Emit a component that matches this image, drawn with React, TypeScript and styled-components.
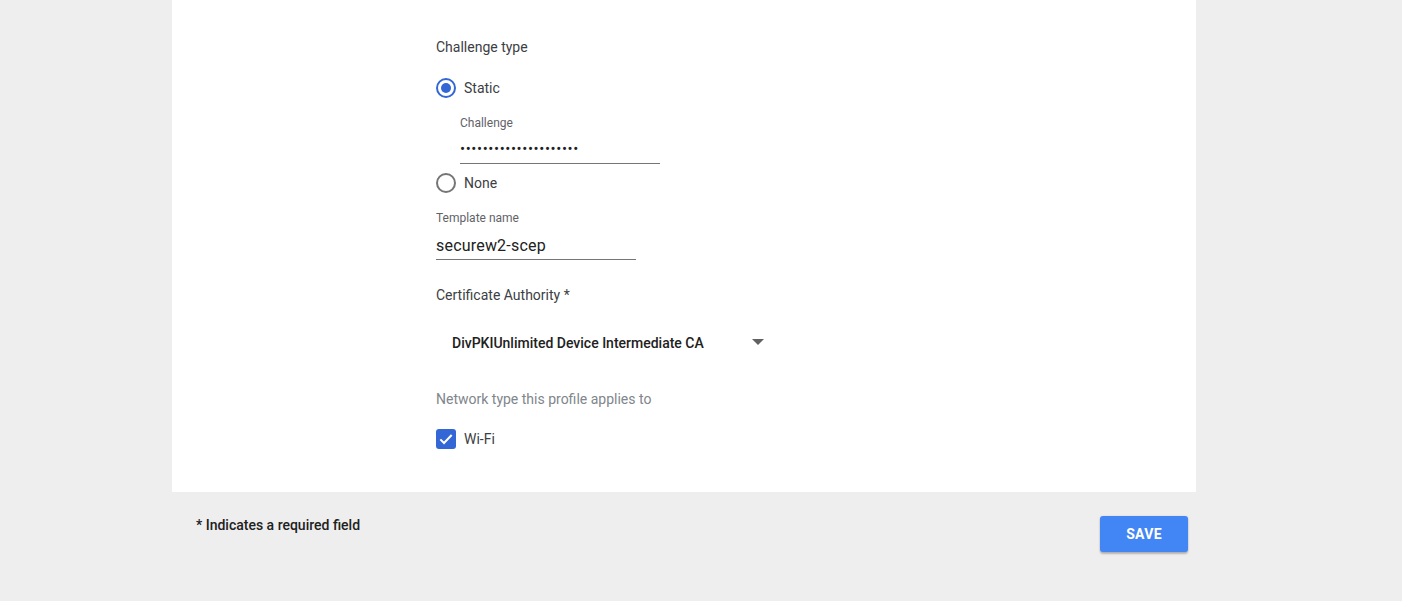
import React from "react";
import styled, { createGlobalStyle } from "styled-components";

const Global = createGlobalStyle`
  html, body { margin: 0; padding: 0; background: #eeeeee; }
  body { font-family: Roboto, "Noto Sans", Arial, sans-serif; color: #212121; }
  * { box-sizing: border-box; }
`;

const Page = styled.div`
  width: 1402px;
  min-height: 601px;
  background: #eeeeee;
  padding-left: 172px;
`;

const Panel = styled.section`
  width: 1024px;
  height: 492px;
  background: #ffffff;
  padding: 37px 0 0 264px;
  display: flex;
  flex-direction: column;
`;

const Title = styled.div<{ $muted?: boolean; $mt?: number }>`
  font-size: 14px;
  line-height: 20px;
  margin-top: ${(p) => p.$mt ?? 0}px;
  color: ${(p) => (p.$muted ? "#80868b" : "#3c4043")};
`;

const OptionRow = styled.label<{ $mt: number }>`
  display: flex;
  align-items: center;
  gap: 8px;
  height: 20px;
  margin-top: ${(p) => p.$mt}px;
  font-size: 14px;
  line-height: 20px;
  color: #3c4043;
  cursor: pointer;
`;

const OptionText = styled.span`
  margin-top: -1px;
`;

const Radio = styled.span<{ $on?: boolean }>`
  width: 20px;
  height: 20px;
  border-radius: 50%;
  border: 2px solid ${(p) => (p.$on ? "#3367d6" : "#757575")};
  display: flex;
  align-items: center;
  justify-content: center;
  &::after {
    content: "";
    width: 10px;
    height: 10px;
    border-radius: 50%;
    background: ${(p) => (p.$on ? "#3367d6" : "transparent")};
  }
`;

const Check = styled.span`
  width: 20px;
  height: 20px;
  border-radius: 3px;
  background: #3367d6;
  display: flex;
  align-items: center;
  justify-content: center;
`;

const Field = styled.div<{ $mt: number; $ml?: number; $w: number }>`
  display: flex;
  flex-direction: column;
  margin-top: ${(p) => p.$mt}px;
  margin-left: ${(p) => p.$ml ?? 0}px;
  width: ${(p) => p.$w}px;
`;

const FieldLabel = styled.div`
  font-size: 12px;
  line-height: 16px;
  color: #5f6368;
`;

const TextInput = styled.input<{ $h: number; $fs: number; $ls?: number; $pt?: number }>`
  height: ${(p) => p.$h}px;
  border: none;
  border-bottom: 1px solid #757575;
  outline: none;
  padding: ${(p) => p.$pt ?? 0}px 0 0 0;
  font-family: Roboto, "Noto Sans", Arial, sans-serif;
  font-size: ${(p) => p.$fs}px;
  letter-spacing: ${(p) => p.$ls ?? 0.2}px;
  color: #212121;
  background: transparent;
`;

const Select = styled.div`
  margin-top: 18px;
  width: 340px;
  height: 40px;
  display: flex;
  align-items: center;
  justify-content: space-between;
  padding: 0 12px 0 16px;
  font-size: 14px;
  font-weight: 500;
  color: #212121;
`;

const Arrow = styled.span`
  width: 0;
  height: 0;
  border-left: 6px solid transparent;
  border-right: 6px solid transparent;
  border-top: 6px solid #616161;
  margin-top: -2px;
`;

const Footer = styled.footer`
  width: 1024px;
  display: flex;
  justify-content: space-between;
  align-items: flex-start;
  padding: 0 8px 0 24px;
`;

const Note = styled.div`
  padding-top: 23px;
  font-size: 14px;
  line-height: 20px;
  font-weight: 500;
  color: #212121;
`;

const SaveButton = styled.button`
  margin-top: 24px;
  width: 88px;
  height: 36px;
  border: none;
  border-radius: 3px;
  background: #4285f4;
  color: #ffffff;
  font-family: Roboto, "Noto Sans", Arial, sans-serif;
  font-size: 14px;
  font-weight: 700;
  letter-spacing: 0.3px;
  padding: 0 0 1px 0;
  box-shadow: 0 2px 2px rgba(0, 0, 0, 0.24), 0 0 2px rgba(0, 0, 0, 0.12);
  cursor: pointer;
`;

export default function App() {
  return (
    <Page>
      <Global />
      <Panel>
        <Title>Challenge type</Title>
        <OptionRow $mt={21}>
          <Radio $on />
          <OptionText>Static</OptionText>
        </OptionRow>
        <Field $mt={17} $ml={24} $w={200}>
          <FieldLabel>Challenge</FieldLabel>
          <TextInput type="password" readOnly value="abcdefghijklmnopqrstu" $h={33} $fs={15} $ls={0.6} $pt={3} />
        </Field>
        <OptionRow $mt={9}>
          <Radio />
          <OptionText>None</OptionText>
        </OptionRow>
        <Field $mt={17} $w={200}>
          <FieldLabel>Template name</FieldLabel>
          <TextInput type="text" readOnly value="securew2-scep" $h={34} $fs={16} $pt={6} />
        </Field>
        <Title $mt={25}>Certificate Authority *</Title>
        <Select>
          DivPKIUnlimited Device Intermediate CA
          <Arrow />
        </Select>
        <Title $muted $mt={26}>Network type this profile applies to</Title>
        <OptionRow $mt={20}>
          <Check>
            <svg width="16" height="16" viewBox="0 0 24 24">
              <path d="M3.5 12.5l5.5 5.5L20.5 6" fill="none" stroke="#fff" strokeWidth="3" />
            </svg>
          </Check>
          <OptionText>Wi-Fi</OptionText>
        </OptionRow>
      </Panel>
      <Footer>
        <Note>* Indicates a required field</Note>
        <SaveButton>SAVE</SaveButton>
      </Footer>
    </Page>
  );
}
